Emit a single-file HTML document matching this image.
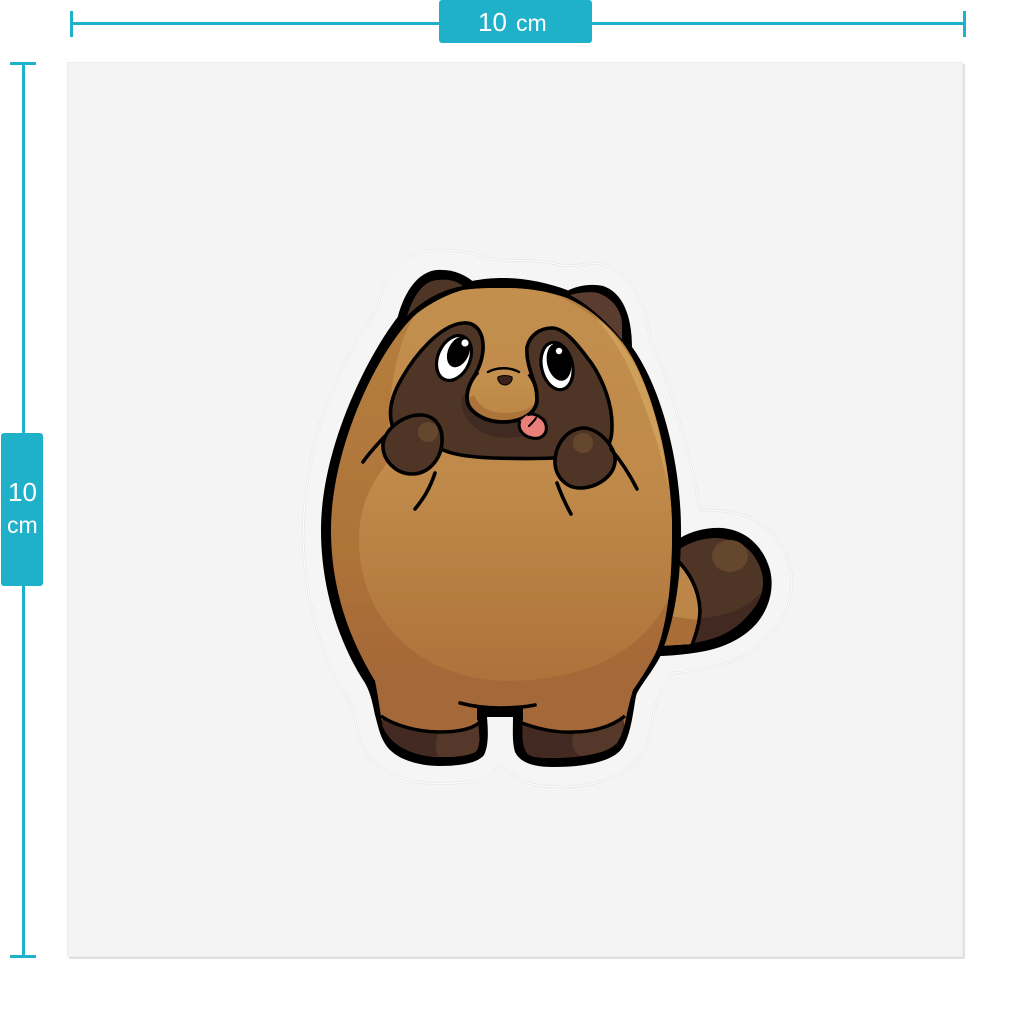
<!DOCTYPE html>
<html>
<head>
<meta charset="utf-8">
<style>
html,body{margin:0;padding:0;background:#fff;width:1024px;height:1024px;overflow:hidden}
svg{display:block}
text{font-family:"Liberation Sans",sans-serif;fill:#fff}
</style>
</head>
<body>
<svg width="1024" height="1024" viewBox="0 0 1024 1024" xmlns="http://www.w3.org/2000/svg">
<defs>
<linearGradient id="belly" x1="0" y1="0" x2="0" y2="1"><stop offset="0" stop-color="#c38f4e"/><stop offset="0.5" stop-color="#bf8a4a"/><stop offset="1" stop-color="#ae723a"/></linearGradient>
<linearGradient id="base" x1="0" y1="0" x2="0" y2="1"><stop offset="0" stop-color="#b67f40"/><stop offset="0.55" stop-color="#ad7439"/><stop offset="0.8" stop-color="#a56838"/><stop offset="1" stop-color="#a56838"/></linearGradient>
<linearGradient id="nose" x1="0" y1="0" x2="0" y2="1"><stop offset="0" stop-color="#c4914f"/><stop offset="1" stop-color="#bb8643"/></linearGradient>
<clipPath id="bodyclip"><path id="inner" d="M503,288 C530,288 550,292 567,298 C590,308 608,325 623,343 C650,380 672,460 672,530 C672,580 668,620 657,650 C650,665 640,680 633,690 C630,700 629,705 627,713 C625,725 622,735 617,743 C608,752 590,757 553,758 C540,758 530,757 527,753 C522,745 522,735 523,713 L477,713 C478,725 480,735 479,743 C478,750 476,752 473,753 C462,757 450,757 440,757 C425,757 412,753 403,748 C392,742 387,735 383,727 C380,712 378,695 375,681 C350,640 331,590 331,530 C331,450 375,355 413,317 C425,306 445,295 463,290 C478,288 490,288 503,288Z"/></clipPath>
<filter id="soft" x="-5%" y="-5%" width="110%" height="110%"><feGaussianBlur stdDeviation="0.35"/></filter>
</defs>

<!-- paper -->
<rect x="69" y="64" width="896" height="895" fill="#d9d9d9" opacity="0.8"/>
<rect x="67" y="62" width="896" height="895" fill="#f4f4f4"/>
<rect x="67.5" y="62.5" width="895" height="894" fill="none" stroke="#ededed" stroke-width="1"/>

<!-- dimension lines -->
<g fill="#20b1ca">
<rect x="70" y="11" width="3" height="26"/>
<rect x="71" y="22" width="893" height="3"/>
<rect x="963" y="11" width="3" height="26"/>
<rect x="439" y="0" width="153" height="43" rx="3"/>
<rect x="10" y="62" width="26" height="3"/>
<rect x="22" y="63" width="3" height="894"/>
<rect x="10" y="955" width="26" height="3"/>
<rect x="1" y="433" width="42" height="153" rx="3"/>
</g>
<text x="478" y="31" font-size="26">10</text>
<text x="516" y="31" font-size="23">cm</text>
<text x="8" y="501" font-size="26">10</text>
<text x="7" y="533" font-size="23">cm</text>

<!-- sticker contour -->
<path d="M413,255 C440,245 470,252 490,259 C510,262 530,258 560,265 C575,268 585,262 600,264 C625,270 645,295 650,340 C662,365 672,392 680,425 C690,460 695,480 700,510 C715,510 735,510 755,520 C780,535 792,560 792,585 C790,615 775,635 750,652 C730,665 705,670 673,673 C665,685 658,695 655,707 C650,730 650,745 640,757 C625,775 600,785 567,787 C545,787 525,785 517,777 L501,765 L487,777 C475,783 450,784 425,783 C400,780 380,770 368,755 C358,740 355,720 353,707 C350,700 345,695 340,687 C322,655 305,600 303,540 C303,500 310,455 322,418 C335,380 355,340 378,308 C380,290 392,265 413,255Z" fill="#f5f5f5" stroke="#e2e2e2" stroke-width="2.4"/>
<path d="M413,255 C440,245 470,252 490,259 C510,262 530,258 560,265 C575,268 585,262 600,264 C625,270 645,295 650,340 C662,365 672,392 680,425 C690,460 695,480 700,510 C715,510 735,510 755,520 C780,535 792,560 792,585 C790,615 775,635 750,652 C730,665 705,670 673,673 C665,685 658,695 655,707 C650,730 650,745 640,757 C625,775 600,785 567,787 C545,787 525,785 517,777 L501,765 L487,777 C475,783 450,784 425,783 C400,780 380,770 368,755 C358,740 355,720 353,707 C350,700 345,695 340,687 C322,655 305,600 303,540 C303,500 310,455 322,418 C335,380 355,340 378,308 C380,290 392,265 413,255Z" fill="none" stroke="#fcfcfc" stroke-width="1.3"/>

<g filter="url(#soft)">
<!-- tail -->
<path d="M680,538 C693,530 710,527 722,528 C745,530 763,545 770,570 C775,590 768,610 757,623 C745,637 725,648 700,652 C688,654 670,656 660,656 L640,640Z" fill="#000"/>
<path d="M675,552 C690,541 705,538 717,538 C733,539 747,545 754,556 C760,565 763,573 763,583 C763,595 757,605 750,613 C740,625 730,632 717,637 C708,640 700,642 693,643 L670,600Z" fill="#4f3528"/>
<path d="M698,618 C715,618 745,612 761,592 C759,602 755,607 750,613 C740,625 730,632 717,637 C708,640 700,642 693,643Z" fill="#432c21"/>
<ellipse cx="730" cy="556" rx="18" ry="16" fill="#65472f"/>
<path d="M672,555 C690,572 699,590 700,610 C700,620 697,632 692,644 L660,646 L655,600Z" fill="#bb8647"/>
<path d="M668,616 L698,620 C698,628 695,636 692,644 L660,646Z" fill="#a96d38"/>
<path d="M675,558 C690,572 699,590 700,610 C700,620 697,632 692,645" fill="none" stroke="#000" stroke-width="3.6"/>

<!-- ear silhouettes + body silhouette -->
<path d="M397,320 C402,298 415,272 437,270 C452,269 465,274 476,284 L420,310Z" fill="#000"/>
<path d="M565,292 C575,286 590,283 603,286 C622,292 632,315 632,347 L600,320Z" fill="#000"/>
<path d="M503,278 C525,278 548,283 567,290 C592,300 615,325 632,347 C660,385 681,460 681,530 C681,580 675,620 660,657 C652,672 643,682 637,693 C634,700 633,730 623,747 C615,760 590,767 553,767 C532,767 520,762 515,752 C512,742 513,730 513,717 L487,717 C488,730 489,745 484,755 C478,763 460,766 440,766 C420,766 400,760 390,750 C380,740 378,725 375,715 C372,700 370,692 365,683 C340,645 321,590 321,530 C321,450 365,360 397,318 C410,303 440,288 472,281 C482,279 492,278 503,278Z" fill="#000"/>

<!-- ear inners -->
<path d="M407,316 C412,300 420,285 432,281 C445,278 455,280 463,286 C445,289 425,298 407,316Z" fill="#4f3528"/>
<path d="M570,295 C578,293 590,291 598,293 C612,298 622,310 622,325 L622,340 C610,325 590,305 570,295Z" fill="#5a3e2e"/>

<!-- body fill -->
<g clip-path="url(#bodyclip)">
  <rect x="320" y="280" width="370" height="490" fill="url(#base)"/>
  <path d="M415,315 C440,292 470,285 503,285 C560,285 610,320 640,370 C665,420 685,500 680,560 C670,630 610,681 507,681 C420,680 359,620 359,540 C359,505 372,482 388,462 C388,440 388,410 393,380 C397,355 405,330 415,315Z" fill="url(#belly)"/>
  <path d="M596,318 C615,330 635,360 648,395 C658,425 664,450 668,485 C660,445 642,395 625,360 C615,342 605,328 596,318Z" fill="#cfa05a"/>
  <!-- feet -->
  <path d="M383,717 C392,724 415,732 440,732 C455,732 470,730 478,723 L490,770 L370,770Z" fill="#432c21"/>
  <path d="M440,732 C455,732 470,730 478,724 L482,760 L440,760 C435,752 434,740 440,732Z" fill="#54382a"/>
  <path d="M523,723 C535,728 555,733 573,732 C590,732 610,728 623,717 L630,770 L515,770Z" fill="#432c21"/>
  <path d="M576,732 C590,732 612,727 623,717 L622,745 C610,755 595,757 585,758 C573,755 568,740 576,732Z" fill="#54382a"/>
</g>
<path d="M381,716 C392,724 415,732 440,732 C455,732 470,730 479,723" fill="none" stroke="#000" stroke-width="3.4"/>
<path d="M522,723 C535,728 555,733 573,732 C590,732 610,728 625,716" fill="none" stroke="#000" stroke-width="3.4"/>
<path d="M460,703 C475,707 490,708 500,708 C512,708 525,707 535,705" fill="none" stroke="#000" stroke-width="3.6" stroke-linecap="round"/>
<rect x="477" y="707" width="46" height="4" fill="#000"/>
<rect x="477" y="708" width="10" height="12" fill="#000"/>
<rect x="513" y="708" width="10" height="12" fill="#000"/>
<rect x="487" y="708" width="26" height="9" fill="#000"/>

<!-- mask -->
<path d="M463,323 C478,322 484,335 483,350 C482,362 478,370 472,380 L535,385 C530,370 526,360 527,347 C530,335 540,328 552,328 C565,328 578,345 592,364 C604,382 612,405 612,425 C612,435 611,440 608,446 L575,456 C555,459 525,459 493,458 C470,457 455,455 443,450 L392,425 C388,410 392,395 402,378 C415,355 440,325 463,323Z" fill="#4f3528" stroke="#000" stroke-width="3.6" stroke-linejoin="round"/>
<path d="M462,395 C458,415 475,437 505,438 C530,438 545,428 548,420 L520,405 L490,395Z" fill="#3f2b21"/>

<!-- nose -->
<path d="M486,371 C476,375 467,386 467,398 C467,412 485,422 503,422 C522,422 537,413 537,399 C537,386 529,377 520,371 C510,367 497,367 486,371Z" fill="url(#nose)"/>
<path d="M474,395 C470,398 466,398 467,402 C472,414 488,422 503,422 C520,422 535,414 537,402 C530,410 518,413 503,413 C490,413 478,406 474,395Z" fill="#ac733a"/>
<path d="M478,372 C472,378 467,388 467,398 C467,412 485,422 503,422 C522,422 537,413 537,399 C537,388 534,380 529,374" fill="none" stroke="#000" stroke-width="3.8"/>
<path d="M488,372 C497,367 510,367 519,372" fill="none" stroke="#000" stroke-width="2.4" stroke-linecap="round"/>
<path d="M498,377 C502,375 508,375 512,377 C513,381 509,385 505,385 C501,385 497,381 498,377Z" fill="#3a241b" stroke="#000" stroke-width="1"/>

<!-- eyes -->
<ellipse cx="454" cy="358" rx="16" ry="23.5" transform="rotate(24 454 358)" fill="#fff" stroke="#000" stroke-width="3.2"/>
<ellipse cx="458.500" cy="352" rx="10.500" ry="16" transform="rotate(24 458.500 352)" fill="#000"/>
<circle cx="465" cy="343" r="3.6" fill="#fff"/>
<ellipse cx="557" cy="366" rx="15.500" ry="24" transform="rotate(-13 557 366)" fill="#fff" stroke="#000" stroke-width="3.2"/>
<ellipse cx="559" cy="362" rx="12" ry="19" transform="rotate(-12 559 362)" fill="#000"/>
<circle cx="559" cy="351" r="3.2" fill="#fff"/>

<!-- tongue -->
<path d="M520,421 C517,428 522,436 532,438 C541,440 548,434 546,425 C544,417 533,412 527,415" fill="#ea7f7a" stroke="#000" stroke-width="3" stroke-linejoin="round"/>
<path d="M529,426 C532,423 535,420 536,418" fill="none" stroke="#000" stroke-width="2" stroke-linecap="round"/>

<!-- paws -->
<path d="M383,444 C385,428 405,414 422,415 C436,416 443,428 442,442 C441,460 428,474 412,474 C396,474 382,460 383,444Z" fill="#4f3528" stroke="#000" stroke-width="3.6"/>
<circle cx="428" cy="432" r="10" fill="#65472f"/>
<path d="M384,437 C377,445 369,453 363,462" fill="none" stroke="#000" stroke-width="3.6" stroke-linecap="round"/>
<path d="M435,473 C430,488 424,498 415,509" fill="none" stroke="#000" stroke-width="3.6" stroke-linecap="round"/>
<path d="M555,459 C557,440 570,428 585,428 C602,430 617,450 615,462 C613,478 595,488 580,488 C565,488 554,475 555,459Z" fill="#4f3528" stroke="#000" stroke-width="3.6"/>
<circle cx="583" cy="443" r="10" fill="#65472f"/>
<path d="M611,449 C620,460 630,475 637,489" fill="none" stroke="#000" stroke-width="3.6" stroke-linecap="round"/>
<path d="M557,483 C561,494 566,505 571,514" fill="none" stroke="#000" stroke-width="3.6" stroke-linecap="round"/>
</g>
</svg>
</body>
</html>
